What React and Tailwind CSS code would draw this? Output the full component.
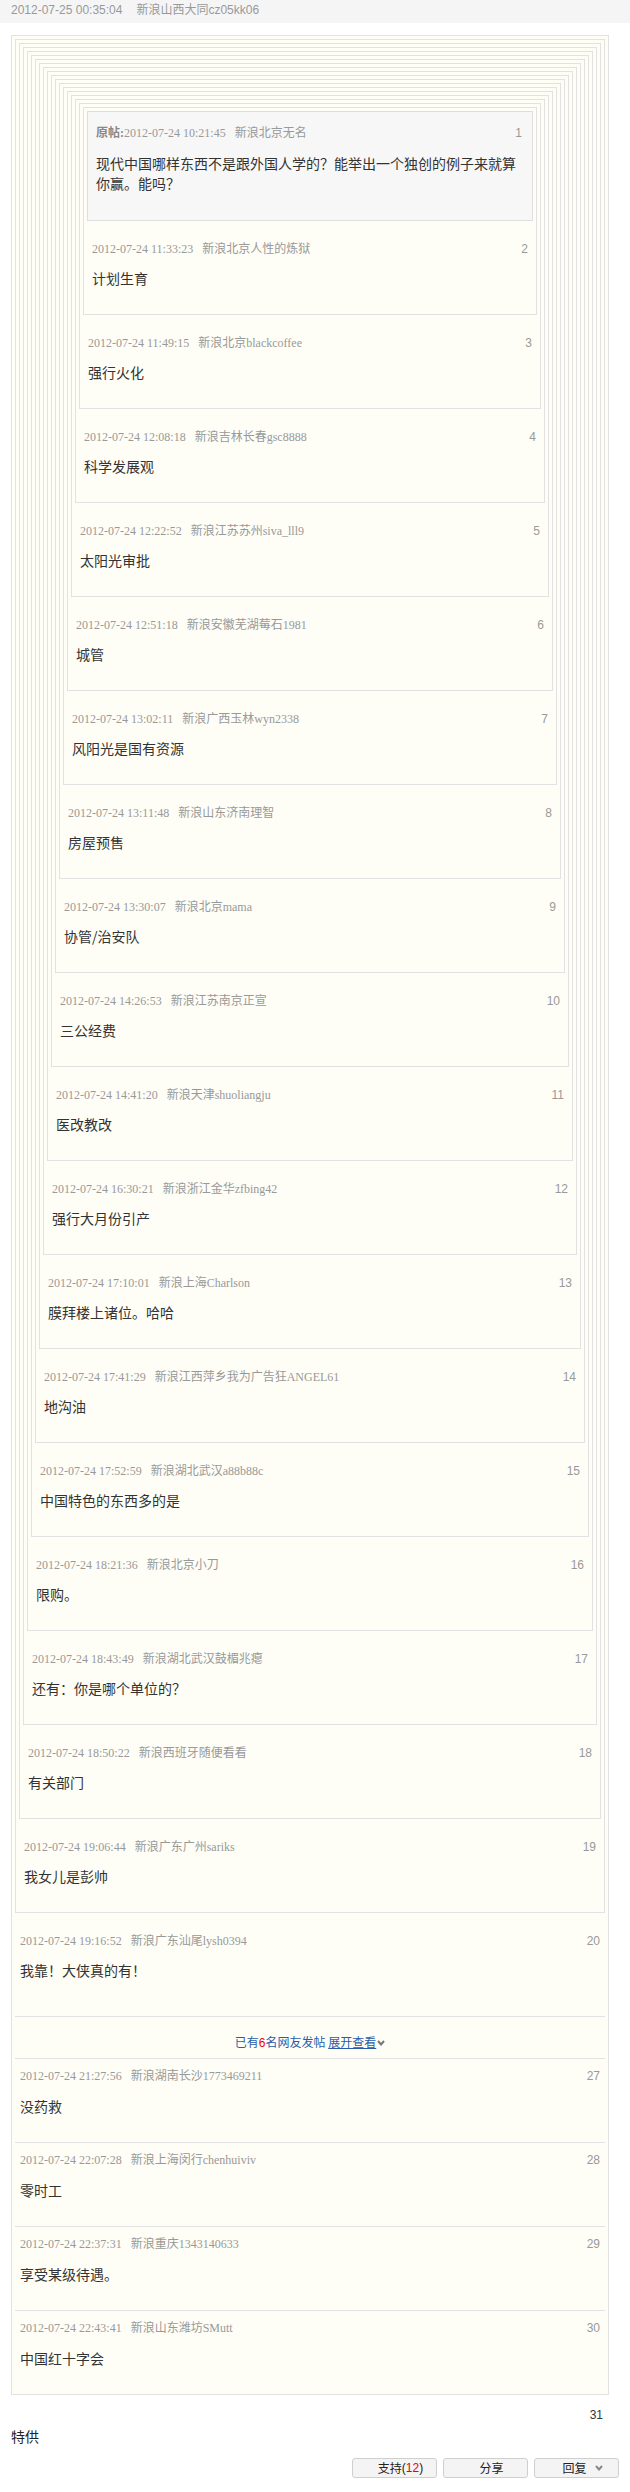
import React from "react";

const floors = [
  { n: 1, d: "2012-07-24 10:21:45", u: "新浪北京无名", c: "现代中国哪样东西不是跟外国人学的？能举出一个独创的例子来就算你赢。能吗？" },
  { n: 2, d: "2012-07-24 11:33:23", u: "新浪北京人性的炼狱", c: "计划生育" },
  { n: 3, d: "2012-07-24 11:49:15", u: "新浪北京blackcoffee", c: "强行火化" },
  { n: 4, d: "2012-07-24 12:08:18", u: "新浪吉林长春gsc8888", c: "科学发展观" },
  { n: 5, d: "2012-07-24 12:22:52", u: "新浪江苏苏州siva_lll9", c: "太阳光审批" },
  { n: 6, d: "2012-07-24 12:51:18", u: "新浪安徽芜湖莓石1981", c: "城管" },
  { n: 7, d: "2012-07-24 13:02:11", u: "新浪广西玉林wyn2338", c: "风阳光是国有资源" },
  { n: 8, d: "2012-07-24 13:11:48", u: "新浪山东济南理智", c: "房屋预售" },
  { n: 9, d: "2012-07-24 13:30:07", u: "新浪北京mama", c: "协管/治安队" },
  { n: 10, d: "2012-07-24 14:26:53", u: "新浪江苏南京正宣", c: "三公经费" },
  { n: 11, d: "2012-07-24 14:41:20", u: "新浪天津shuoliangju", c: "医改教改" },
  { n: 12, d: "2012-07-24 16:30:21", u: "新浪浙江金华zfbing42", c: "强行大月份引产" },
  { n: 13, d: "2012-07-24 17:10:01", u: "新浪上海Charlson", c: "膜拜楼上诸位。哈哈" },
  { n: 14, d: "2012-07-24 17:41:29", u: "新浪江西萍乡我为广告狂ANGEL61", c: "地沟油" },
  { n: 15, d: "2012-07-24 17:52:59", u: "新浪湖北武汉a88b88c", c: "中国特色的东西多的是" },
  { n: 16, d: "2012-07-24 18:21:36", u: "新浪北京小刀", c: "限购。" },
  { n: 17, d: "2012-07-24 18:43:49", u: "新浪湖北武汉鼓楣兆瘪", c: "还有：你是哪个单位的？" },
  { n: 18, d: "2012-07-24 18:50:22", u: "新浪西班牙随便看看", c: "有关部门" },
  { n: 19, d: "2012-07-24 19:06:44", u: "新浪广东广州sariks", c: "我女儿是彭帅" },
  { n: 20, d: "2012-07-24 19:16:52", u: "新浪广东汕尾lysh0394", c: "我靠！大侠真的有！" },
];

const tail = [
  { n: 27, d: "2012-07-24 21:27:56", u: "新浪湖南长沙1773469211", c: "没药救" },
  { n: 28, d: "2012-07-24 22:07:28", u: "新浪上海闵行chenhuiviv", c: "零时工" },
  { n: 29, d: "2012-07-24 22:37:31", u: "新浪重庆1343140633", c: "享受某级待遇。" },
  { n: 30, d: "2012-07-24 22:43:41", u: "新浪山东潍坊SMutt", c: "中国红十字会" },
];

function Meta({ f, yuan }) {
  return (
    <div className="flex justify-between h-[16px] leading-[16px] text-[12px]">
      <div className="font-['Liberation_Serif','Noto_Sans_CJK_SC',serif] text-[#999] whitespace-nowrap">
        {yuan && <b className="text-[#888] font-bold">原帖:</b>}
        <span>{f.d}</span>
        <span className="ml-[9px]">{f.u}</span>
      </div>
      <span className="font-['Liberation_Sans',sans-serif] text-[#999]">{f.n}</span>
    </div>
  );
}

function Content({ children }) {
  return (
    <div className="text-[14px] leading-[20px] text-[#333] font-['Noto_Sans_CJK_SC',sans-serif]">
      {children}
    </div>
  );
}

function Section({ f, pb = "pb-[26px]" }) {
  return (
    <div className={`pl-[5px] pr-[5px] pt-[20px] ${pb}`}>
      <Meta f={f} />
      <div className="mt-[11px]">
        <Content>{f.c}</Content>
      </div>
    </div>
  );
}

function FlatSection({ f }) {
  return (
    <div className="border-t border-[#e3e3e3] pl-[5px] pr-[5px] pt-[9px] pb-[26px]">
      <Meta f={f} />
      <div className="mt-[12px]">
        <Content>{f.c}</Content>
      </div>
    </div>
  );
}

function Original() {
  const f = floors[0];
  return (
    <div className="border border-[#dedede] bg-[#f7f7f7] pl-[8px] pr-[10px] pt-[13px] pb-[27px]">
      <Meta f={f} yuan />
      <div className="mt-[12px]">
        <Content>
          现代中国哪样东西不是跟外国人学的？能举出一个独创的例子来就算
          <br />
          你赢。能吗？
        </Content>
      </div>
    </div>
  );
}

function Nest({ k }) {
  if (k === 1) return <Original />;
  return (
    <div className="border border-[#e2e2e2] bg-[#fefef6] pt-[3px] px-[3px]">
      <Nest k={k - 1} />
      <Section f={floors[k - 1]} />
    </div>
  );
}

function Chevron({ color = "#777" }) {
  return (
    <svg width="8" height="6" viewBox="0 0 8 6" className="inline-block">
      <path d="M1 1 L4 4.5 L7 1" fill="none" stroke={color} strokeWidth="2" />
    </svg>
  );
}

function Btn({ children }) {
  return (
    <div className="w-[85px] h-[20px] border border-[#cfcfcf] rounded-[3px] bg-[#f4f4f4] flex items-center justify-center pl-[12px] text-[12px] text-[#222] font-['Noto_Sans_CJK_SC',sans-serif] leading-[18px]">
      {children}
    </div>
  );
}

export default function App() {
  return (
    <div className="w-[630px] bg-white font-['Liberation_Sans','Noto_Sans_CJK_SC',sans-serif]">
      <div className="h-[23px] bg-[#f5f5f5] pl-[11px] text-[12px] leading-[20px] text-[#999] whitespace-nowrap">
        <span>2012-07-25 00:35:04</span>
        <span className="ml-[14px]">新浪山西大同cz05kk06</span>
      </div>

      <div className="mt-[12px] ml-[11px] w-[598px] border border-[#e2e2e2] bg-[#fefef6] pt-[3px] px-[3px]">
        <Nest k={19} />
        <Section f={floors[19]} pb="pb-[36px]" />
        <div className="border-t border-[#e3e3e3] pt-[15px] pb-[5px] flex justify-center items-center text-[12px] leading-[20px] text-[#2a5caa] font-['Noto_Sans_CJK_SC',sans-serif]">
          <span>
            已有<span className="text-[#e00] font-['Liberation_Sans',sans-serif]">6</span>名网友发帖{" "}
            <span className="underline">展开查看</span>
          </span>
          <span className="ml-[1px] flex items-center">
            <Chevron />
          </span>
        </div>
        {tail.map((f) => (
          <FlatSection key={f.n} f={f} />
        ))}
      </div>

      <div className="mt-[12px] pr-[27px] h-[16px] leading-[16px] text-right text-[12px] text-[#333]">31</div>
      <div className="mt-[3px] pl-[11px] h-[20px] leading-[20px] text-[14px] text-[#222] font-['Noto_Sans_CJK_SC',sans-serif]">
        特供
      </div>
      <div className="mt-[12px] pb-[14px] pr-[11px] flex justify-end gap-[6px]">
        <Btn>
          支持<span className="font-['Liberation_Sans',sans-serif]">(</span>
          <span className="text-[#e00] font-['Liberation_Sans',sans-serif]">12</span>
          <span className="font-['Liberation_Sans',sans-serif]">)</span>
        </Btn>
        <Btn>分享</Btn>
        <Btn>
          回复
          <span className="ml-[8px] flex items-center">
            <Chevron color="#888" />
          </span>
        </Btn>
      </div>
    </div>
  );
}
